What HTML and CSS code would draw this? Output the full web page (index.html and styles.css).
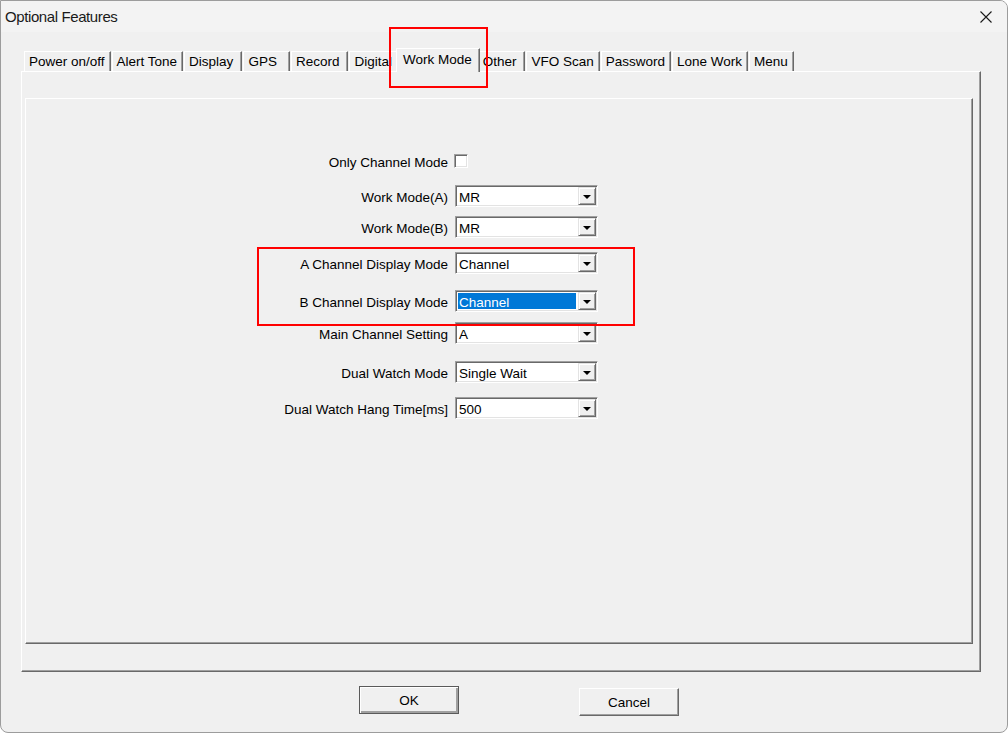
FILE: index.html
```html
<!DOCTYPE html>
<html lang="en">
<head>
  <meta charset="UTF-8" />
  <meta name="viewport" content="width=device-width, initial-scale=1.0" />
  <title>Optional Features</title>
  <link rel="stylesheet" href="styles.css">
</head>
<body>
  <div class="window">
    <div class="titlebar">
      <span class="title">Optional Features</span>
      <svg class="close" width="12" height="12" viewBox="0 0 12 12">
        <path d="M0.5 0.5 L11.5 11.5 M11.5 0.5 L0.5 11.5" stroke="#1a1a1a" stroke-width="1.1" fill="none" />
      </svg>
    </div>

    <div class="tabs">
      <div class="tab">Power on/off</div>
      <div class="tab">Alert Tone</div>
      <div class="tab loose">Display</div>
      <div class="tab wide">GPS</div>
      <div class="tab loose">Record</div>
      <div class="tab">Digital</div>
      <div class="tab active">Work Mode</div>
      <div class="tab loose">Other</div>
      <div class="tab">VFO Scan</div>
      <div class="tab">Password</div>
      <div class="tab">Lone Work</div>
      <div class="tab">Menu</div>
    </div>

    <div class="tab-panel">
      <div class="page">
        <div class="form">
          <div class="row">
            <label>Only Channel Mode</label>
            <span class="check"></span>
          </div>
          <div class="row">
            <label>Work Mode(A)</label>
            <div class="combo"><span class="value">MR</span><span class="drop"></span></div>
          </div>
          <div class="row">
            <label>Work Mode(B)</label>
            <div class="combo"><span class="value">MR</span><span class="drop"></span></div>
          </div>
          <div class="row">
            <label>A Channel Display Mode</label>
            <div class="combo"><span class="value">Channel</span><span class="drop"></span></div>
          </div>
          <div class="row">
            <label>B Channel Display Mode</label>
            <div class="combo"><span class="value selected">Channel</span><span class="drop"></span></div>
          </div>
          <div class="row">
            <label>Main Channel Setting</label>
            <div class="combo"><span class="value">A</span><span class="drop"></span></div>
          </div>
          <div class="row">
            <label>Dual Watch Mode</label>
            <div class="combo"><span class="value">Single Wait</span><span class="drop"></span></div>
          </div>
          <div class="row">
            <label>Dual Watch Hang Time[ms]</label>
            <div class="combo"><span class="value">500</span><span class="drop"></span></div>
          </div>
        </div>
      </div>
    </div>

    <div class="actions">
      <button class="btn default">OK</button>
      <button class="btn cancel">Cancel</button>
    </div>

    <!-- red highlight frames -->
    <div class="mark mark-tab"></div>
    <div class="mark mark-rows"></div>
  </div>
</body>
</html>
```

FILE: styles.css
```css
* {
  box-sizing: border-box;
}
body {
  margin: 0;
  background: #fff;
  font-family: "Liberation Sans", Arial, sans-serif;
  font-size: 13.5px;
  color: #000;
}
.window {
  position: relative;
  width: 1008px;
  height: 733px;
  background: #f0f0f0;
  border: 1px solid #9c9c9c;
  border-radius: 0 8px 8px 8px;
  overflow: hidden;
}
.titlebar {
  display: flex;
  align-items: center;
  justify-content: space-between;
  height: 31px;
  padding: 0 15px 0 4px;
  background: #f3f3f3;
}
.title {
  font-size: 15px;
  letter-spacing: -0.4px;
  color: #1a1a1a;
}

/* tab strip */
.tabs {
  display: flex;
  align-items: flex-end;
  gap: 1px;
  margin-top: 16px;
  padding-left: 23px;
}
.tab {
  height: 20px;
  padding: 0 5px 0 4px;
  line-height: 19px;
  white-space: nowrap;
  background: #f0f0f0;
  border-top: 1px solid #fff;
  border-left: 1px solid #fff;
  border-right: 1px solid #696969;
  box-shadow: inset -1px 0 #a0a0a0;
}
.tab.loose {
  padding-right: 8px;
}
.tab.wide {
  padding-right: 12px;
}
.tab.active {
  position: relative;
  z-index: 1;
  height: 24px;
  margin: 0 -3px -1px -3px;
  padding: 0 7px 0 6px;
  line-height: 22px;
}

.tab-panel {
  width: 960px;
  height: 601px;
  margin-left: 20px;
  border: 1px solid;
  border-color: #fff #696969 #696969 #fff;
  box-shadow: inset -1px -1px #a0a0a0;
  padding: 26px 0 0 3px;
}
.page {
  width: 948px;
  height: 546px;
  border: 1px solid;
  border-color: #fff #696969 #696969 #fff;
  box-shadow: inset -1px -1px #a0a0a0;
}

/* settings form */
.form {
  display: flex;
  flex-direction: column;
  margin-left: 181px;
}
.row {
  display: grid;
  grid-template-columns: 241px 143px;
  column-gap: 7px;
  align-items: center;
  height: 22px;
}
.row label {
  text-align: right;
  white-space: nowrap;
  padding-top: 3px;
}
.row:nth-child(1) { margin-top: 51px; }
.row:nth-child(2) { margin-top: 13px; }
.row:nth-child(3) { margin-top: 9px; }
.row:nth-child(4) { margin-top: 14px; }
.row:nth-child(5) { margin-top: 16px; }
.row:nth-child(6) { margin-top: 10px; }
.row:nth-child(7) { margin-top: 17px; }
.row:nth-child(8) { margin-top: 14px; }

.check {
  width: 14px;
  height: 14px;
  margin-left: -1px;
  background: #fff;
  border: 1px solid;
  border-color: #a0a0a0 #fff #fff #a0a0a0;
  box-shadow: inset 1px 1px #696969, inset -1px -1px #e3e3e3;
}
.combo {
  display: flex;
  height: 22px;
  padding: 1px;
  background: #fff;
  border: 1px solid;
  border-color: #a0a0a0 #fff #fff #a0a0a0;
  box-shadow: inset 1px 1px #696969, inset -1px -1px #e3e3e3;
}
.value {
  flex: 1;
  margin: 1px 2px 1px 1px;
  padding-left: 1px;
  line-height: 19px;
  white-space: nowrap;
}
.value.selected {
  background: #0078d7;
  color: #fff;
}
.drop {
  display: flex;
  align-items: center;
  justify-content: center;
  width: 18px;
  height: 18px;
  background: #f0f0f0;
  border: 1px solid;
  border-color: #e3e3e3 #696969 #696969 #e3e3e3;
  box-shadow: inset 1px 1px #fff, inset -1px -1px #a0a0a0;
}
.drop::after {
  content: "";
  border-left: 4px solid transparent;
  border-right: 4px solid transparent;
  border-top: 4px solid #000;
  margin-top: 1px;
}

/* dialog buttons */
.actions {
  display: flex;
  align-items: flex-start;
  gap: 120px;
  margin-top: 14px;
  padding-left: 358px;
}
.btn {
  width: 100px;
  height: 28px;
  padding: 0;
  font-family: inherit;
  font-size: 13.5px;
  color: #000;
  background: #f0f0f0;
  border: 1px solid;
  border-color: #fff #696969 #696969 #fff;
  box-shadow: inset -1px -1px #a0a0a0;
}
.btn.default {
  border-color: #5a5a5a;
  box-shadow: inset 1px 1px #fff, inset -2px -2px #a0a0a0;
}
.btn.cancel {
  margin-top: 2px;
}

.mark {
  position: absolute;
  border: 2px solid #f00;
}
.mark-tab {
  left: 388px;
  top: 26px;
  width: 99px;
  height: 61px;
}
.mark-rows {
  left: 256px;
  top: 246px;
  width: 378px;
  height: 79px;
}
```
